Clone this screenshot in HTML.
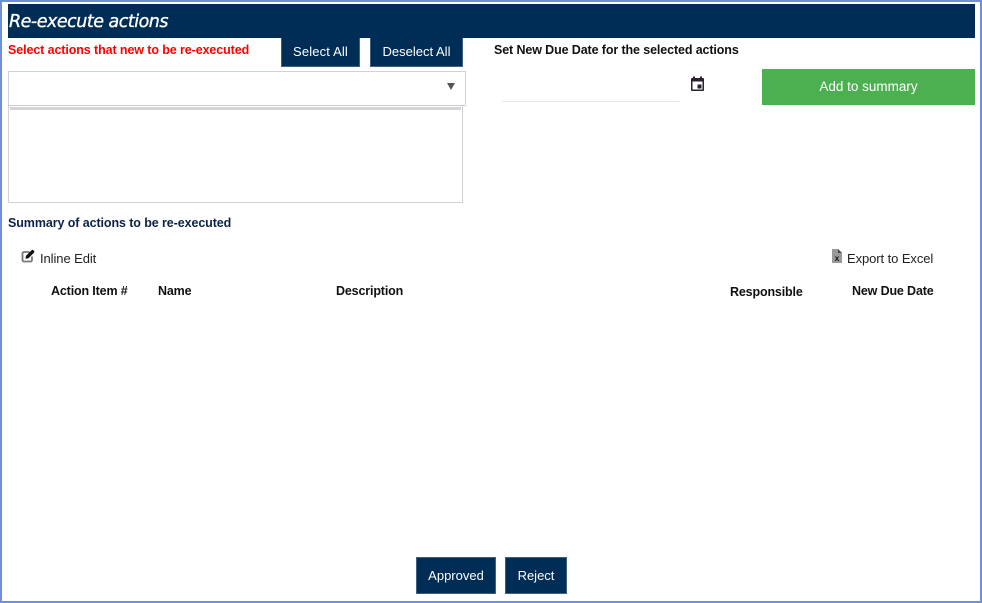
<!DOCTYPE html>
<html><head><meta charset="utf-8"><style>
html,body{margin:0;padding:0;background:#fff}
body{position:relative;width:982px;height:603px;overflow:hidden;font-family:"Liberation Sans",sans-serif;font-size:13px;color:#111}
.a{position:absolute;white-space:nowrap}
.b{position:absolute;background:#002d56;color:#fff;text-align:center;box-sizing:border-box;font-size:13px;border:1px solid #3f5f80}
.h{font-weight:bold;font-size:12.5px;color:#111;letter-spacing:-.15px}
</style></head><body>
<div class="a" style="left:0;top:0;width:982px;height:603px;box-sizing:border-box;border:2px solid #6f90d6"></div>
<div class="a" style="left:8px;top:4px;width:967px;height:34px;background:#002d56"></div>
<div class="a" style="left:9px;top:11px;font-size:17.5px;line-height:22px;color:#fff;font-style:italic;font-family:'DejaVu Sans',sans-serif;letter-spacing:-.5px;-webkit-text-stroke:.35px #fff">Re-execute actions</div>
<div class="a" style="left:8px;top:43px;font-weight:bold;font-size:12.5px;line-height:14px;color:#f00;letter-spacing:-.1px">Select actions that new to be re-executed</div>
<div class="b" style="left:281px;top:38px;width:79px;height:29px;line-height:27px;border-top:0;letter-spacing:.15px">Select All</div>
<div class="b" style="left:370px;top:38px;width:93px;height:29px;line-height:27px;border-top:0">Deselect All</div>
<div class="a" style="left:494px;top:43px;font-weight:bold;font-size:12.5px;line-height:14px;color:#111;letter-spacing:-.115px">Set New Due Date for the selected actions</div>
<div class="a" style="left:8px;top:71px;width:458px;height:35px;box-sizing:border-box;border:1px solid #ccd3dc;border-bottom:1px solid #c5ccd4"></div>
<div class="a" style="left:447px;top:83px;width:0;height:0;border-left:4px solid transparent;border-right:4px solid transparent;border-top:7px solid #555"></div>
<div class="a" style="left:8px;top:106px;width:455px;height:97px;box-sizing:border-box;border:1px solid #d2d2d2;border-top:0"></div>
<div class="a" style="left:10px;top:107px;width:451px;height:3px;background:#d4d4d4"></div>
<div class="a" style="left:502px;top:100px;width:178px;height:2px;box-sizing:border-box;border-bottom:1px solid #e6e6e6;border-radius:0 0 4px 4px"></div>
<svg class="a" style="left:690px;top:76px" width="15" height="16" viewBox="0 0 15 16"><path d="M2 2h11a1 1 0 0 1 1 1v11a1 1 0 0 1-1 1H2a1 1 0 0 1-1-1V3a1 1 0 0 1 1-1z" fill="#2a2030"/><rect x="3" y="0.500" width="2" height="3" fill="#2a2030"/><rect x="10" y="0.500" width="2" height="3" fill="#2a2030"/><rect x="2.500" y="5.500" width="10" height="8" fill="#fff"/><rect x="7.500" y="8.500" width="4" height="4" fill="#2a2030"/></svg>
<div class="a" style="left:762px;top:69px;width:213px;height:36px;background:#4caf50;color:#fff;text-align:center;line-height:36px;font-size:13.5px">Add to summary</div>
<div class="a" style="left:8px;top:216px;font-weight:bold;font-size:12.5px;line-height:15px;color:#0b2447;letter-spacing:-.09px">Summary of actions to be re-executed</div>
<svg class="a" style="left:21px;top:249px" width="14" height="14" viewBox="0 0 14 14"><path d="M8.500 3H3a1.500 1.500 0 0 0-1.500 1.500V11A1.500 1.500 0 0 0 3 12.500h6.500A1.500 1.500 0 0 0 11 11V7.500" fill="none" stroke="#777" stroke-width="1.800"/><path d="M4.500 9.800l.5-3L10.600 1.200a1.200 1.200 0 0 1 1.700 0l.7.700a1.200 1.200 0 0 1 0 1.700L7.500 9.300z" fill="#111"/></svg>
<div class="a" style="left:40px;top:251px;font-size:13px;line-height:16px;color:#222;letter-spacing:-.08px">Inline Edit</div>
<svg class="a" style="left:832px;top:249px" width="10" height="14" viewBox="0 0 10 14"><path d="M0 0h6l4 4v10H0z" fill="#999"/><path d="M6 0l4 4H6z" fill="#444"/><text x="5" y="12" font-size="8" font-weight="bold" text-anchor="middle" font-family="Liberation Sans" fill="#111">x</text></svg>
<div class="a" style="left:847px;top:251px;font-size:13px;line-height:16px;color:#222;letter-spacing:-.08px">Export to Excel</div>
<div class="a h" style="left:51px;top:284px;line-height:14px">Action Item #</div>
<div class="a h" style="left:158px;top:284px;line-height:14px">Name</div>
<div class="a h" style="left:336px;top:284px;line-height:14px">Description</div>
<div class="a h" style="left:730px;top:285px;line-height:14px">Responsible</div>
<div class="a h" style="left:852px;top:284px;line-height:14px">New Due Date</div>
<div class="b" style="left:416px;top:557px;width:80px;height:37px;line-height:35px">Approved</div>
<div class="b" style="left:505px;top:557px;width:62px;height:37px;line-height:35px">Reject</div>
</body></html>
